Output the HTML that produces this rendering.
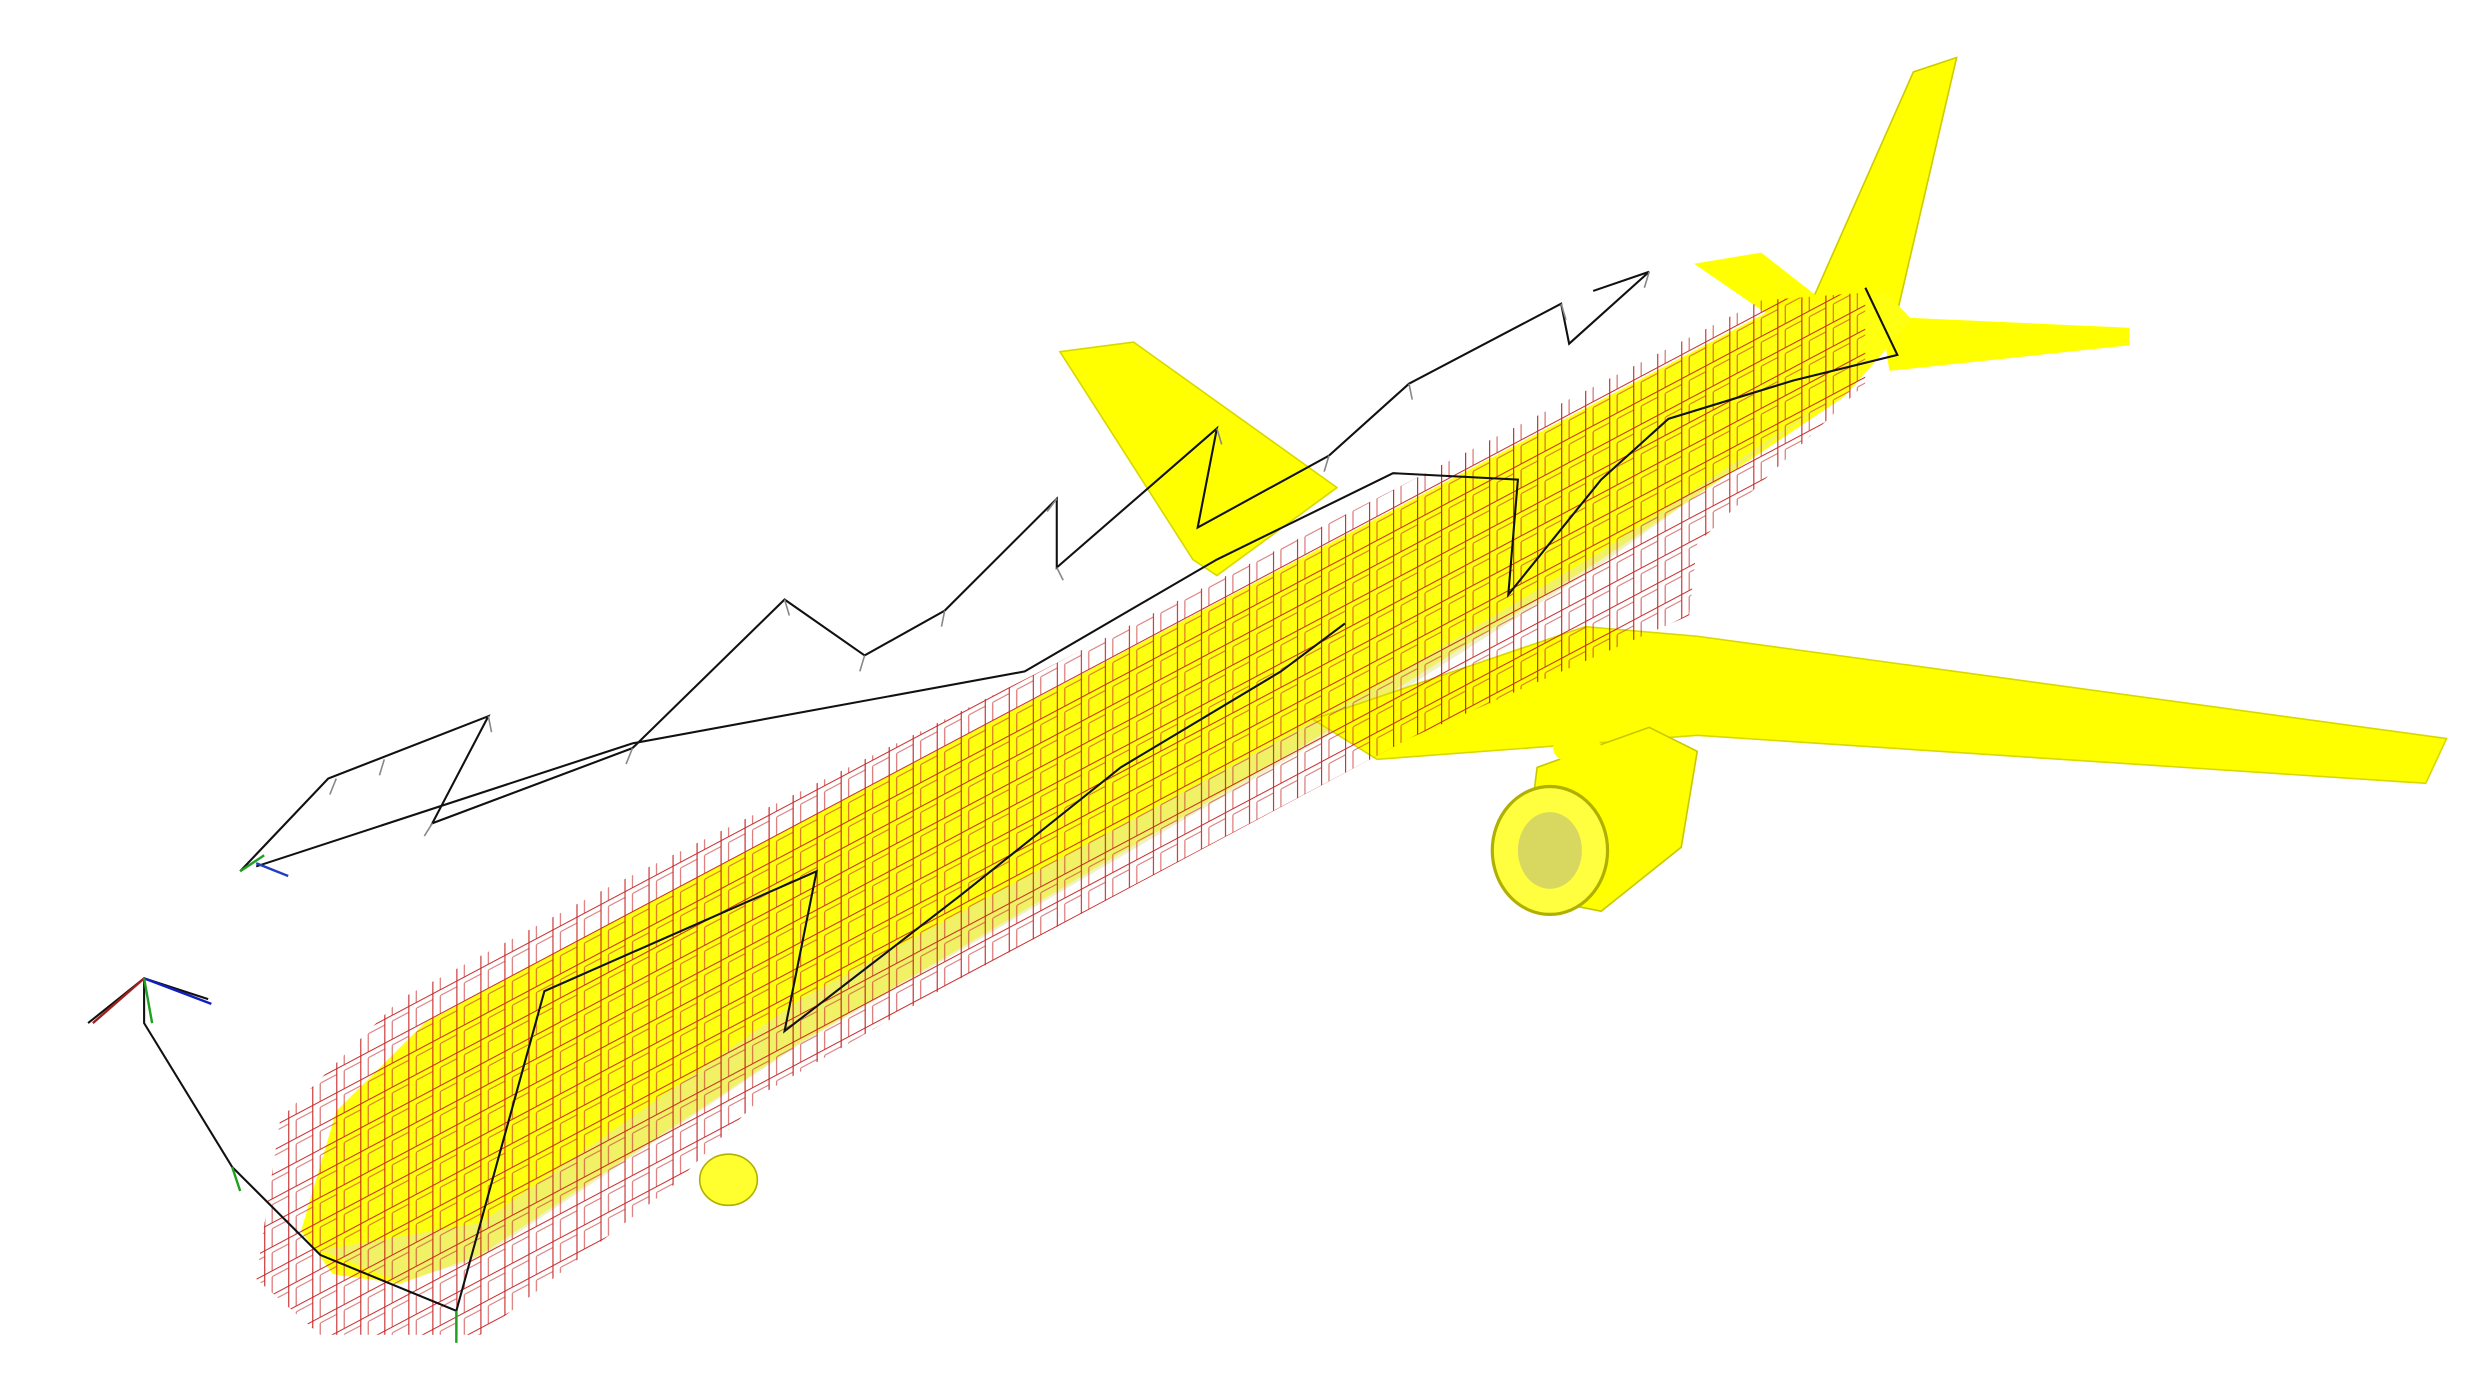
<!DOCTYPE html>
<html><head><meta charset="utf-8"><style>
html,body{margin:0;padding:0;background:#fff;width:2485px;height:1378px;overflow:hidden}
svg{display:block}
</style></head><body>
<svg width="2485" height="1378" viewBox="0 0 1552 862" preserveAspectRatio="none" xmlns="http://www.w3.org/2000/svg">
<defs>
<pattern id="grid" width="15" height="15" patternUnits="userSpaceOnUse" patternTransform="skewY(-28)">
<path d="M0 0H15M0 0V15" stroke="#c01010" stroke-width="1.4" fill="none"/>
<path d="M5 4H15M5 4V15" stroke="#c83030" stroke-width="0.8" fill="none" opacity="0.7"/>
</pattern>
<clipPath id="fz"><polygon points="160,800 175,700 250,625 380,555 640,425 1100,188 1165,183 1165,240 1060,340 1055,385 880,462 600,612 480,682 420,742 300,835 200,835"/></clipPath>
</defs>
<!-- far wing -->
<polygon points="662,220 708,214 835,305 760,360 745,350" fill="#ffff00" stroke="#d8d800" stroke-width="1"/>
<!-- tail -->
<polygon points="1130,192 1195,45 1222,36 1185,195" fill="#ffff00" stroke="#cccc00"/>
<polygon points="1058,165 1100,158 1160,205 1135,218" fill="#ffff00"/>
<polygon points="1175,198 1330,205 1330,216 1180,232" fill="#ffff00"/>
<!-- fuselage -->
<polygon points="188,770 210,695 265,640 380,578 1110,192 1178,183 1194,200 1152,248 1000,350 850,445 500,652 300,785 250,803 208,797" fill="#ffff10"/>
<polygon points="200,782 300,765 500,625 850,435 1000,345 1150,245 1000,353 850,448 500,653 300,787 250,802" fill="#e8e8a0" opacity="0.6"/>
<!-- near wing -->
<polygon points="990,392 1060,398 1528,462 1515,490 1060,460 860,475 820,450" fill="#ffff00" stroke="#d8d800"/>
<!-- engines -->
<polygon points="960,480 1030,455 1060,470 1050,530 1000,570 950,560" fill="#ffff00" stroke="#c8c800"/>
<ellipse cx="968" cy="532" rx="36" ry="40" fill="#ffff40" stroke="#b0b000" stroke-width="2"/>
<ellipse cx="968" cy="532" rx="20" ry="24" fill="#d8d860"/>
<ellipse cx="985" cy="468" rx="15" ry="10" fill="#ffff00"/>
<ellipse cx="455" cy="738" rx="18" ry="16" fill="#ffff30" stroke="#b0b000"/>
<!-- grid -->
<rect x="0" y="0" width="1552" height="862" fill="url(#grid)" clip-path="url(#fz)" opacity="0.9"/>
<!-- skeleton -->
<g fill="none" stroke="#111" stroke-width="1.3">
<polyline points="150,545 205,487 305,448 270,515 395,468 490,375 540,410 590,382 660,312 660,355 760,268 748,330 830,285 880,240 975,190 980,215 1030,170 995,182"/>
<polyline points="160,542 395,465 640,420 760,350 870,296 948,300 942,372 1000,300 1042,262 1120,238 1185,222 1165,180"/>
<polyline points="90,612 90,640 145,730 200,785 285,820 340,620 510,545 490,645 600,560 700,480 800,420 840,390"/>
<polyline points="55,640 90,612 130,625"/>
</g>
<g stroke="#888" stroke-width="1">
<path d="M210,487l-4,10M240,475l-3,10M270,515l-5,8M305,448l2,10M395,468l-4,10M490,375l3,10M540,410l-3,10M590,382l-2,10M660,312l-6,8M660,355l4,8M760,268l3,10M830,285l-3,10M880,240l2,10M975,190l3,10M1030,170l-3,10"/>
</g>
<g stroke-width="1.5">
<line x1="90" y1="612" x2="132" y2="628" stroke="#1020c0"/>
<line x1="90" y1="612" x2="58" y2="640" stroke="#a02020"/>
<line x1="90" y1="612" x2="95" y2="640" stroke="#20a020"/>
<line x1="150" y1="545" x2="165" y2="535" stroke="#20a020"/>
<line x1="160" y1="540" x2="180" y2="548" stroke="#2040c0"/>
<line x1="285" y1="820" x2="285" y2="840" stroke="#20a020"/>
<line x1="145" y1="730" x2="150" y2="745" stroke="#20a020"/>
</g>
</svg>
</body></html>
